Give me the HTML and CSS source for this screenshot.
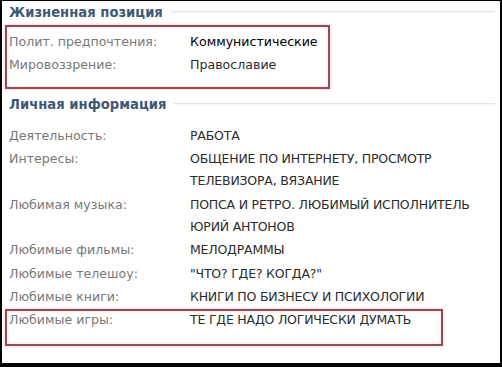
FILE: index.html
```html
<!DOCTYPE html>
<html lang="ru">
<head>
    <meta charset="UTF-8">
    <meta name="viewport" content="width=device-width, initial-scale=1.0">
    <title>Профиль</title>
    <link rel="stylesheet" href="styles.css">
</head>
<body>
    <div class="frame">
        <h2 class="section-title"><span>Жизненная позиция</span></h2>

        <div class="marked marked-top">
            <div class="row">
                <div class="label">Полит. предпочтения:</div>
                <div class="value value-dark">Коммунистические</div>
            </div>
            <div class="row">
                <div class="label">Мировоззрение:</div>
                <div class="value">Православие</div>
            </div>
        </div>

        <h2 class="section-title section-second"><span>Личная информация</span></h2>

        <div class="info">
            <div class="row">
                <div class="label">Деятельность:</div>
                <div class="value caps">РАБОТА</div>
            </div>
            <div class="row">
                <div class="label">Интересы:</div>
                <div class="value caps">ОБЩЕНИЕ ПО ИНТЕРНЕТУ, ПРОСМОТР<br>ТЕЛЕВИЗОРА, ВЯЗАНИЕ</div>
            </div>
            <div class="row">
                <div class="label">Любимая музыка:</div>
                <div class="value caps">ПОПСА И РЕТРО. ЛЮБИМЫЙ ИСПОЛНИТЕЛЬ<br>ЮРИЙ АНТОНОВ</div>
            </div>
            <div class="row">
                <div class="label">Любимые фильмы:</div>
                <div class="value caps">МЕЛОДРАММЫ</div>
            </div>
            <div class="row">
                <div class="label">Любимые телешоу:</div>
                <div class="value caps">"ЧТО? ГДЕ? КОГДА?"</div>
            </div>
            <div class="row">
                <div class="label">Любимые книги:</div>
                <div class="value caps">КНИГИ ПО БИЗНЕСУ И ПСИХОЛОГИИ</div>
            </div>
            <div class="marked marked-bottom">
                <div class="row">
                    <div class="label">Любимые игры:</div>
                    <div class="value caps">ТЕ ГДЕ НАДО ЛОГИЧЕСКИ ДУМАТЬ</div>
                </div>
            </div>
        </div>
    </div>
</body>
</html>
```

FILE: styles.css
```css
/* styles.css */

html, body {
    margin: 0;
    padding: 0;
    background-color: #000;
}

.frame {
    box-sizing: border-box;
    width: 502px;
    height: 367px;
    background-color: #fff;
    border-style: solid;
    border-color: #000;
    border-width: 1px 2px 4px 2px;
    padding: 2px 0 0 7px;
    font-family: "DejaVu Sans", Verdana, sans-serif;
    font-size: 12.6px;
    overflow: hidden;
}

.section-title {
    display: flex;
    align-items: center;
    margin: 0;
    height: 18px;
    font-size: 13.2px;
    font-weight: bold;
    color: #3f5875;
    padding-right: 5px;
}

.section-title::after {
    content: "";
    flex: 1;
    margin-left: 8px;
    border-top: 1px solid #e2e6eb;
    border-bottom: 1px solid #f5f6f8;
}

.section-second {
    margin-top: 6px;
}

.row {
    display: flex;
    line-height: 22px;
    padding: 0.75px 0;
}

.label {
    width: 181px;
    flex-shrink: 0;
    color: #787878;
}

.value {
    color: #2b2b2b;
}

.value-dark {
    color: #000;
}

.caps {
    font-size: 12.5px;
    letter-spacing: -0.2px;
}

.marked {
    margin-left: -4px;
    padding-left: 2px;
    border: 2px solid #8c4f56;
    box-shadow: 0 0 3px #f2bcc1, inset 0 0 3px #f6cdd1;
}

.marked-top {
    margin-top: 4px;
    width: 319px;
    padding-top: 3px;
    padding-bottom: 10px;
}

.info {
    margin-top: 11px;
}

.marked-bottom {
    width: 432px;
    padding-bottom: 12px;
}

.marked-bottom .row {
    margin-top: -3px;
}
```
